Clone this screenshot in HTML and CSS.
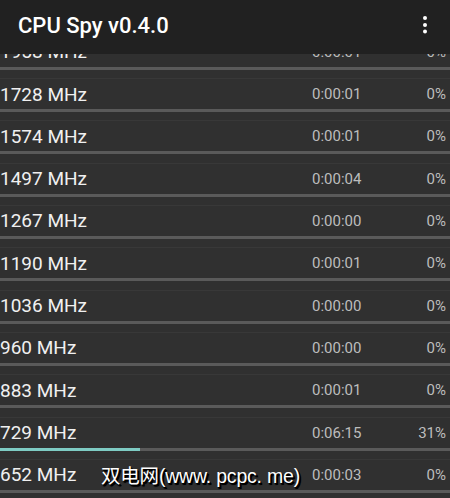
FILE: index.html
```html
<!DOCTYPE html>
<html lang="zh">
<head>
<meta charset="utf-8">
<title>CPU Spy</title>
<link rel="stylesheet" href="styles.css">
</head>
<body>
<div class="app">
  <header class="toolbar">
    <h1 class="title">CPU Spy v0.4.0</h1>
    <button class="menu" aria-label="More options">
      <svg width="4" height="18" viewBox="0 0 4 18"><circle cx="2" cy="2" r="2"/><circle cx="2" cy="9" r="2"/><circle cx="2" cy="15.5" r="2"/></svg>
    </button>
  </header>
  <ul class="states">
    <li class="state"><div class="line"><span class="freq">1958 MHz</span><span class="time">0:00:01</span><span class="pct">0%</span></div><div class="bar"><div class="fill" style="width:0%"></div></div></li>
    <li class="state"><div class="line"><span class="freq">1728 MHz</span><span class="time">0:00:01</span><span class="pct">0%</span></div><div class="bar"><div class="fill" style="width:0%"></div></div></li>
    <li class="state"><div class="line"><span class="freq">1574 MHz</span><span class="time">0:00:01</span><span class="pct">0%</span></div><div class="bar"><div class="fill" style="width:0%"></div></div></li>
    <li class="state"><div class="line"><span class="freq">1497 MHz</span><span class="time">0:00:04</span><span class="pct">0%</span></div><div class="bar"><div class="fill" style="width:0%"></div></div></li>
    <li class="state"><div class="line"><span class="freq">1267 MHz</span><span class="time">0:00:00</span><span class="pct">0%</span></div><div class="bar"><div class="fill" style="width:0%"></div></div></li>
    <li class="state"><div class="line"><span class="freq">1190 MHz</span><span class="time">0:00:01</span><span class="pct">0%</span></div><div class="bar"><div class="fill" style="width:0%"></div></div></li>
    <li class="state"><div class="line"><span class="freq">1036 MHz</span><span class="time">0:00:00</span><span class="pct">0%</span></div><div class="bar"><div class="fill" style="width:0%"></div></div></li>
    <li class="state"><div class="line"><span class="freq">960 MHz</span><span class="time">0:00:00</span><span class="pct">0%</span></div><div class="bar"><div class="fill" style="width:0%"></div></div></li>
    <li class="state"><div class="line"><span class="freq">883 MHz</span><span class="time">0:00:01</span><span class="pct">0%</span></div><div class="bar"><div class="fill" style="width:0%"></div></div></li>
    <li class="state"><div class="line"><span class="freq">729 MHz</span><span class="time">0:06:15</span><span class="pct">31%</span></div><div class="bar"><div class="fill" style="width:31.1%"></div></div></li>
    <li class="state"><div class="line"><span class="freq">652 MHz</span><span class="time">0:00:03</span><span class="pct">0%</span></div><div class="bar"><div class="fill" style="width:0%"></div></div></li>
  </ul>
  <div class="watermark">双电网(www. pcpc. me)</div>
</div>
</body>
</html>
```

FILE: styles.css
```css
* { box-sizing: border-box; }
html, body {
  margin: 0;
  padding: 0;
  background: #303030;
  overflow: hidden;
}
body {
  font-family: Roboto, "Noto Sans", sans-serif;
  color: #f2f2f2;
}
.app {
  position: relative;
  width: 450px;
  height: 498px;
  overflow: hidden;
  display: flex;
  flex-direction: column;
}
.toolbar {
  position: relative;
  z-index: 2;
  flex: 0 0 54px;
  height: 54px;
  background: #212121;
  display: flex;
  align-items: center;
  justify-content: space-between;
  padding: 0 0 4px 18px;
}
.title {
  margin: 0;
  font-size: 22px;
  font-weight: 500;
  color: #ffffff;
  letter-spacing: 0;
}
.menu {
  border: 0;
  background: none;
  padding: 0;
  width: 50px;
  height: 40px;
  display: flex;
  align-items: center;
  justify-content: center;
  fill: #ffffff;
}
.states {
  list-style: none;
  margin: -18.33px 0 0 0;
  padding: 0;
  position: relative;
  z-index: 1;
}
.state {
  height: 42.33px;
  border-top: 1px solid #383838;
  display: flex;
  flex-direction: column;
}
.line {
  height: 30px;
  display: grid;
  grid-template-columns: 312px auto 1fr;
  align-items: center;
  padding-right: 4px;
}
.freq {
  font-size: 19px;
  color: #f0f0f0;
}
.time {
  font-size: 15px;
  color: #bdbdbd;
}
.pct {
  font-size: 15px;
  color: #bdbdbd;
  text-align: right;
}
.bar {
  height: 3px;
  background: #5a5a5a;
}
.fill {
  height: 100%;
  background: #7ecbc3;
}
.watermark {
  position: absolute;
  z-index: 3;
  left: 101px;
  top: 460px;
  font-family: "Liberation Sans", "Noto Sans CJK SC", sans-serif;
  font-size: 19.5px;
  color: #ffffff;
  white-space: nowrap;
  letter-spacing: -0.2px;
  text-shadow: 1px 1px 0 #000, 2px 2px 0 #000, 1px 2px 1px #000;
}
```
